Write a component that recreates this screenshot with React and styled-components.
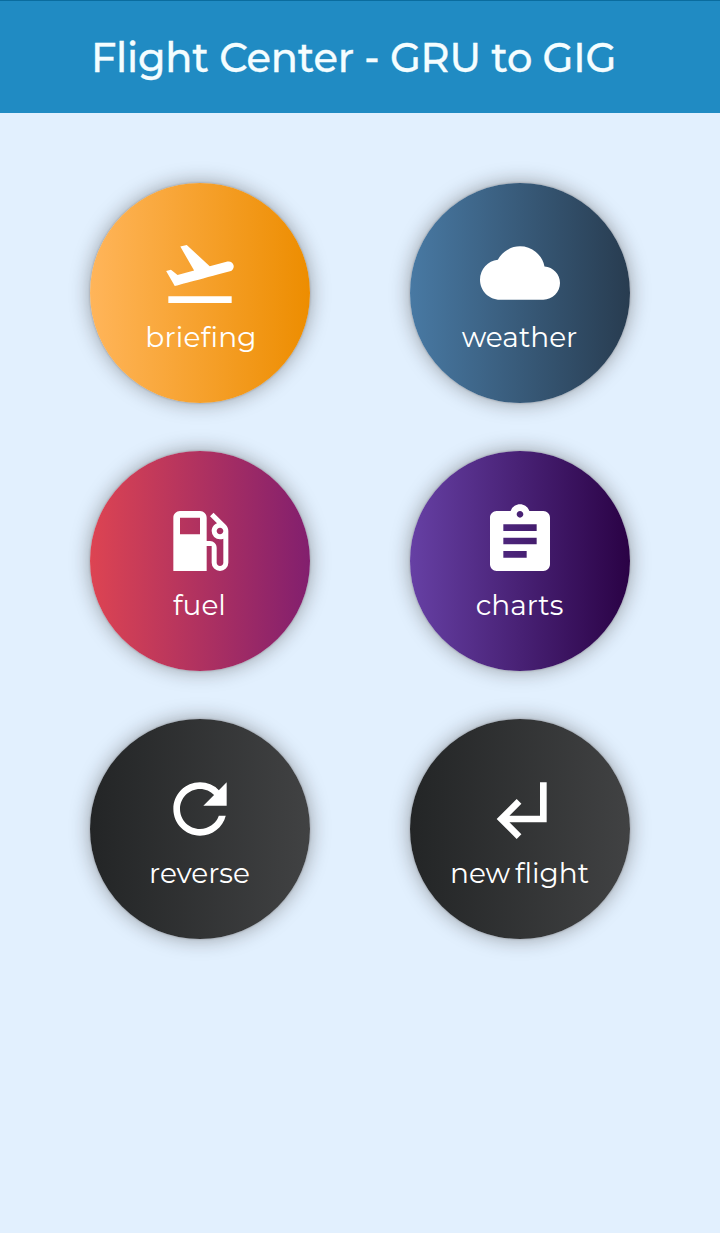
import React from "react";
import styled, { createGlobalStyle } from "styled-components";
import {
  MdFlightTakeoff,
  MdCloud,
  MdLocalGasStation,
  MdAssignment,
  MdRefresh,
  MdSubdirectoryArrowLeft,
} from "react-icons/md";

const GlobalStyle = createGlobalStyle`
  * {
    box-sizing: border-box;
    margin: 0;
    padding: 0;
  }
  body {
    background: #e2f0fe;
    font-family: "Montserrat", "Lato", "Liberation Sans", sans-serif;
  }
`;

const Page = styled.div`
  width: 720px;
  min-height: 1233px;
  background: #e2f0fe;
`;
const Header = styled.header`
  height: 113px;
  padding: 1px 13px 0 0;
  display: flex;
  align-items: center;
  justify-content: center;
  background: #208bc3;
  border-top: 1px solid #0a6c9e;
`;
const Title = styled.h1`
  font-size: 40px;
  line-height: 48px;
  font-weight: 500;
  -webkit-text-stroke: 0.3px #f4fdff;
  letter-spacing: -0.24px;
  white-space: nowrap;
  color: #f4fdff;
`;
const Menu = styled.main`
  display: grid;
  grid-template-columns: 220px 220px;
  column-gap: 100px;
  row-gap: 48px;
  justify-content: center;
  padding-top: 70px;
`;
const RoundButton = styled.button`
  width: 220px;
  height: 220px;
  padding-top: 50px;
  display: flex;
  flex-direction: column;
  align-items: center;
  border: none;
  border-radius: 50%;
  color: #fff;
  font-family: inherit;
  background: linear-gradient(
    to right,
    ${({ $from }) => $from},
    ${({ $to }) => $to}
  );
  box-shadow: 0 0 2px rgba(60, 50, 50, 0.4), 0 0 20px rgba(30, 22, 15, 0.38);
  cursor: pointer;

  svg {
    width: 80px;
    height: 80px;
    flex-shrink: 0;
  }
`;
const Label = styled.span`
  margin-top: 7px;
  padding: ${({ $wide }) => ($wide ? "0 0 0 2px" : "0 1px 0 0")};
  font-size: 28px;
  line-height: 34px;
  font-weight: 400;
  white-space: nowrap;
  word-spacing: -2.5px;
  letter-spacing: ${({ $wide }) => ($wide ? "0.25px" : "0")};
  font-variant-ligatures: none;
`;

const items = [
  { label: "briefing", icon: MdFlightTakeoff, from: "#ffb55a", to: "#ed8d00", wide: true },
  { label: "weather", icon: MdCloud, from: "#4879a3", to: "#283c50" },
  { label: "fuel", icon: MdLocalGasStation, from: "#dd4452", to: "#821f6e" },
  { label: "charts", icon: MdAssignment, from: "#6640a4", to: "#2a0245" },
  { label: "reverse", icon: MdRefresh, from: "#232526", to: "#414243" },
  { label: "new flight", icon: MdSubdirectoryArrowLeft, from: "#232526", to: "#414243" },
];

const App = () => {
  return (
    <>
      <GlobalStyle />
      <Page>
        <Header>
          <Title>Flight Center - GRU to GIG</Title>
        </Header>
        <Menu>
          {items.map(({ label, icon: Icon, from, to, wide }) => (
            <RoundButton key={label} $from={from} $to={to}>
              <Icon />
              <Label $wide={wide}>{label}</Label>
            </RoundButton>
          ))}
        </Menu>
      </Page>
    </>
  );
};

export default App;
